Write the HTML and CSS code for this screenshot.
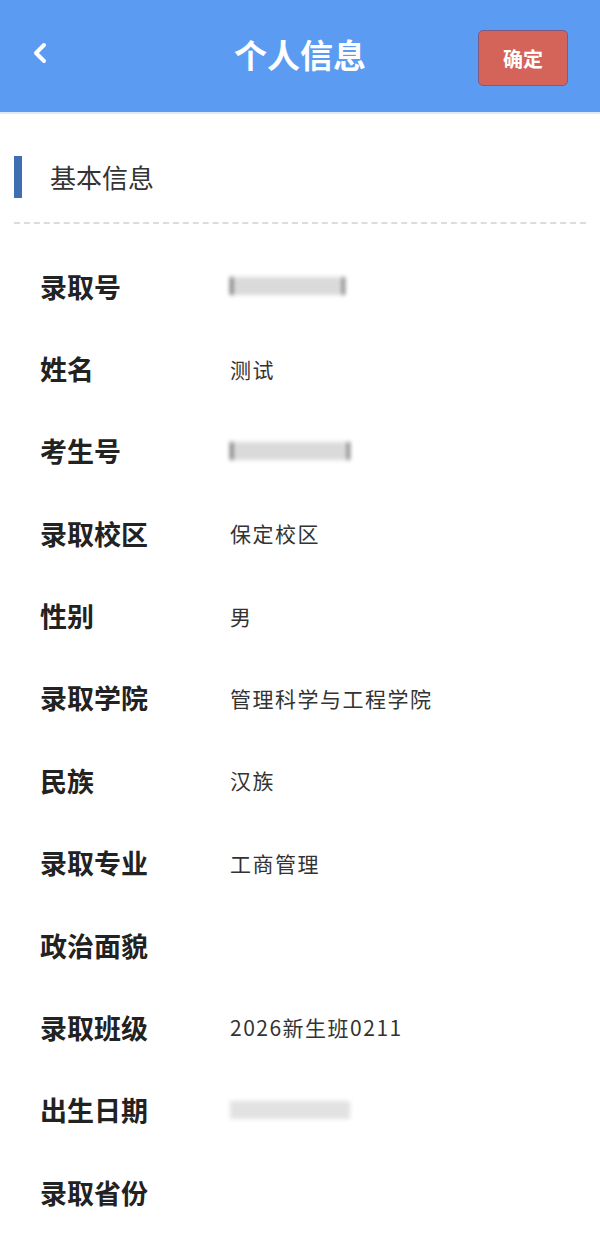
FILE: index.html
```html
<!DOCTYPE html>
<html lang="zh">
<head>
<meta charset="utf-8">
<link rel="stylesheet" href="styles.css">
</head>
<body>
<header class="topbar">
  <span class="back"><svg width="16" height="22" viewBox="0 0 16 22"><path d="M12 3 L4 11 L12 19" fill="none" stroke="#fff" stroke-width="4" stroke-linecap="round" stroke-linejoin="round"/></svg></span>
  <h1 class="title">个人信息</h1>
  <button class="confirm">确定</button>
</header>
<section class="section">
  <div class="section-head"><span class="bar"></span><span class="section-title">基本信息</span></div>
  <div class="divider"></div>
  <div class="rows">
    <div class="row"><span class="label">录取号</span><span class="value"><span class="blur w115"></span></span></div>
    <div class="row"><span class="label">姓名</span><span class="value">测试</span></div>
    <div class="row"><span class="label">考生号</span><span class="value"><span class="blur w120"></span></span></div>
    <div class="row"><span class="label">录取校区</span><span class="value">保定校区</span></div>
    <div class="row"><span class="label">性别</span><span class="value">男</span></div>
    <div class="row"><span class="label">录取学院</span><span class="value">管理科学与工程学院</span></div>
    <div class="row"><span class="label">民族</span><span class="value">汉族</span></div>
    <div class="row"><span class="label">录取专业</span><span class="value">工商管理</span></div>
    <div class="row"><span class="label">政治面貌</span><span class="value"></span></div>
    <div class="row"><span class="label">录取班级</span><span class="value">2026新生班0211</span></div>
    <div class="row"><span class="label">出生日期</span><span class="value"><span class="blur w120 light"></span></span></div>
    <div class="row"><span class="label">录取省份</span><span class="value"></span></div>
  </div>
</section>
</body>
</html>
```
FILE: styles.css
```css
* { box-sizing: border-box; }
html, body { margin: 0; padding: 0; background: #fff; }
body { font-family: "Noto Sans CJK SC", "Noto Sans", sans-serif; width: 600px; overflow: hidden; }
.topbar {
  height: 114px;
  background: #5b9bf2;
  border-bottom: 2px solid #dfe9f7;
  display: flex;
  align-items: center;
  justify-content: space-between;
  padding: 0 32px 0 32px;
  position: relative;
}
.back { display: flex; align-items: center; width: 16px; margin-top: -6px; }
.title {
  margin: 0;
  position: absolute;
  left: 0; right: 0;
  top: 32px;
  text-align: center;
  color: #fff;
  font-size: 33px;
  font-weight: 700;
  line-height: 44px;
  pointer-events: none;
}
.confirm {
  width: 90px;
  height: 56px;
  margin-top: 4px;
  background: #d4645a;
  border: 1px solid #7d5a86;
  border-radius: 5px;
  color: #fff;
  font-family: inherit;
  font-size: 20px;
  font-weight: 700;
  padding: 0;
  position: relative;
  z-index: 1;
}
.section { padding: 0 14px; }
.section-head { display: flex; align-items: center; height: 42px; margin-top: 42px; }
.bar { width: 8px; height: 42px; background: #3f6fb3; }
.section-title { margin-left: 28px; font-size: 26px; color: #333; line-height: 42px; }
.divider { margin-top: 24px; border-top: 2px dashed #dcdcdc; }
.rows { padding-top: 21px; }
.row { display: flex; align-items: center; height: 82.36px; padding-left: 26px; }
.label { width: 190px; font-size: 27px; font-weight: 700; color: #222; }
.value { font-size: 21px; color: #333; letter-spacing: 1.5px; display: flex; align-items: center; }
.blur { display: inline-block; height: 18px; background: #dadada; filter: blur(2px); border-left: 3px solid #666; border-right: 3px solid #777; }
.blur.light { background: #e2e2e2; border: none; }
.w115 { width: 115px; }
.w120 { width: 120px; }
```
